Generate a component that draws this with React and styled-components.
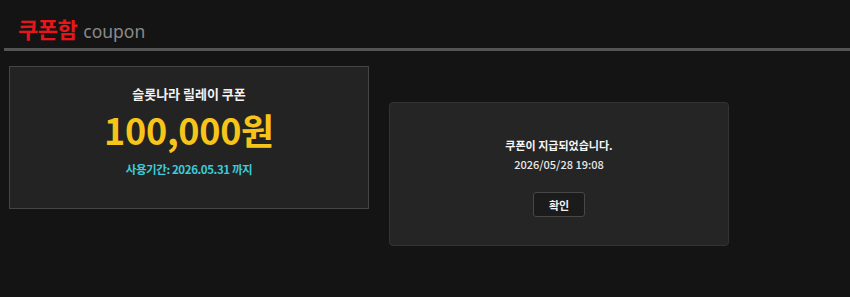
import React from 'react';
import styled, { createGlobalStyle } from 'styled-components';

const GlobalStyle = createGlobalStyle`
  html, body {
    margin: 0;
    padding: 0;
    background: #141414;
  }
  body {
    font-family: "Noto Sans CJK KR", "Noto Sans", sans-serif;
    color: #fff;
  }
`;

const Page = styled.div`
  width: 850px;
  height: 297px;
  padding-left: 4px;
  box-sizing: border-box;
  overflow: hidden;
`;

const Header = styled.div`
  display: flex;
  align-items: baseline;
  height: 51px;
  padding-left: 14px;
  box-sizing: border-box;
  border-bottom: 3px solid #555;
`;

const Title = styled.h1`
  margin: 0;
  padding-top: 14px;
  font-size: 22px;
  font-weight: 700;
  color: #e8151b;
  line-height: 28px;
  letter-spacing: -0.5px;
`;

const SubTitle = styled.span`
  margin-left: 6px;
  font-family: "Noto Sans", sans-serif;
  font-size: 17.5px;
  font-weight: 400;
  color: #8a8a8a;
`;

const Content = styled.div`
  display: flex;
  align-items: flex-start;
  gap: 20px;
  padding: 15px 0 0 5px;
`;

const CouponCard = styled.div`
  display: flex;
  flex-direction: column;
  align-items: center;
  width: 360px;
  height: 143px;
  box-sizing: border-box;
  padding-top: 18px;
  background: #232323;
  border: 1px solid #454545;
`;

const CouponName = styled.div`
  font-size: 13px;
  font-weight: 700;
  line-height: 18px;
  color: #f2f2f2;
`;

const Amount = styled.div`
  margin-top: 5px;
  font-size: 36px;
  font-weight: 700;
  line-height: 42px;
  color: #f7c51a;
  letter-spacing: -0.3px;
`;

const Expire = styled.div`
  margin-top: 11px;
  font-size: 11.5px;
  font-weight: 700;
  line-height: 17px;
  color: #3ccbd8;
  letter-spacing: -0.4px;
`;

const Dialog = styled.div`
  display: flex;
  flex-direction: column;
  align-items: center;
  margin-top: 36px;
  width: 340px;
  height: 144px;
  box-sizing: border-box;
  padding-top: 34px;
  background: #252525;
  border: 1px solid #333;
  border-radius: 4px;
`;

const Message = styled.div`
  font-size: 11px;
  font-weight: 700;
  line-height: 16px;
  color: #f5f5f5;
`;

const Stamp = styled.div`
  margin-top: 3px;
  font-size: 11px;
  font-weight: 500;
  line-height: 16px;
  color: #e8e8e8;
`;

const ConfirmButton = styled.button`
  margin-top: 20px;
  width: 52px;
  height: 25px;
  box-sizing: border-box;
  background: #1b1b1b;
  border: 1px solid #474747;
  border-radius: 3px;
  color: #f0f0f0;
  font-family: inherit;
  font-size: 11px;
  font-weight: 700;
  padding: 0;
`;

export default function App() {
  return (
    <>
      <GlobalStyle />
      <Page>
        <Header>
          <Title>쿠폰함</Title>
          <SubTitle>coupon</SubTitle>
        </Header>
        <Content>
          <CouponCard>
            <CouponName>슬롯나라 릴레이 쿠폰</CouponName>
            <Amount>100,000원</Amount>
            <Expire>사용기간: 2026.05.31 까지</Expire>
          </CouponCard>
          <Dialog>
            <Message>쿠폰이 지급되었습니다.</Message>
            <Stamp>2026/05/28 19:08</Stamp>
            <ConfirmButton>확인</ConfirmButton>
          </Dialog>
        </Content>
      </Page>
    </>
  );
}
